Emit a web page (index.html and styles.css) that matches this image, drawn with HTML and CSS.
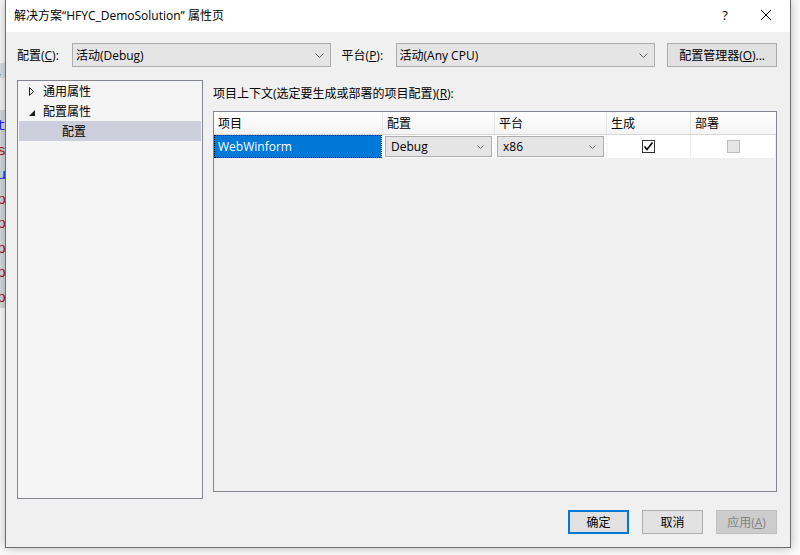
FILE: index.html
```html
<!DOCTYPE html>
<html lang="zh-CN">
<head>
<meta charset="utf-8">
<title>属性页</title>
<link rel="stylesheet" href="styles.css">
</head>
<body>
<div class="desktop">
  <div class="editor-strip">
    <div class="es-top"></div>
    <div class="es-tab">讠</div>
    <div class="es-gap"></div>
    <div class="es-code">
      <div class="cl blue">t</div>
      <div class="cl red">s</div>
      <div class="cl blue">u</div>
      <div class="cl red">p</div>
      <div class="cl red">p</div>
      <div class="cl red">p</div>
      <div class="cl red">p</div>
      <div class="cl red">p</div>
    </div>
  </div>

  <div class="window">
    <div class="titlebar">
      <span class="title">解决方案“HFYC_DemoSolution” 属性页</span>
      <span class="tb-help">?</span>
      <span class="tb-close"><svg width="12" height="12" viewBox="0 0 12 12"><path d="M1 1L11 11M11 1L1 11" stroke="#000" stroke-width="1" fill="none"/></svg></span>
    </div>

    <div class="content">
      <div class="toprow">
        <span class="lbl lbl-cfg">配置(<u>C</u>):</span>
        <div class="combo combo-cfg"><span>活动(Debug)</span><svg class="chev" width="9" height="5" viewBox="0 0 9 5"><path d="M0.5 0.5L4.5 4.5L8.5 0.5" stroke="#606060" fill="none"/></svg></div>
        <span class="lbl lbl-plat">平台(<u>P</u>):</span>
        <div class="combo combo-plat"><span>活动(Any CPU)</span><svg class="chev" width="9" height="5" viewBox="0 0 9 5"><path d="M0.5 0.5L4.5 4.5L8.5 0.5" stroke="#606060" fill="none"/></svg></div>
        <div class="btn btn-mgr">配置管理器(<u>O</u>)...</div>
      </div>

      <div class="main">
        <div class="tree">
          <div class="node">
            <svg class="tri" width="6" height="9" viewBox="0 0 6 9"><path d="M0.5 0.5L4.5 4.5L0.5 8.5Z" stroke="#1e1e1e" fill="none"/></svg>
            <span>通用属性</span>
          </div>
          <div class="node">
            <svg class="tri" width="6" height="9" viewBox="0 0 6 9"><path d="M6 3L6 9L0 9Z" fill="#1e1e1e"/></svg>
            <span>配置属性</span>
          </div>
          <div class="node child selected"><span>配置</span></div>
        </div>

        <div class="right">
          <div class="ctx-label">项目上下文(选定要生成或部署的项目配置)(<u>R</u>):</div>
          <div class="grid">
            <div class="grid-table">
              <div class="hcell">项目</div>
              <div class="hcell">配置</div>
              <div class="hcell">平台</div>
              <div class="hcell">生成</div>
              <div class="hcell">部署</div>

              <div class="dcell dsel"><span>WebWinform</span></div>
              <div class="dcell dcombo"><div class="cellcombo"><span>Debug</span><svg class="chev small" width="7" height="4" viewBox="0 0 7 4"><path d="M0.5 0.5L3.5 3.5L6.5 0.5" stroke="#707070" fill="none"/></svg></div></div>
              <div class="dcell dcombo"><div class="cellcombo"><span>x86</span><svg class="chev small" width="7" height="4" viewBox="0 0 7 4"><path d="M0.5 0.5L3.5 3.5L6.5 0.5" stroke="#707070" fill="none"/></svg></div></div>
              <div class="dcell dcheck"><span class="chk on"><svg width="11" height="11" viewBox="0 0 11 11"><path d="M1.5 5.5L4 8.5L9.5 1.5" stroke="#000" stroke-width="1.6" fill="none"/></svg></span></div>
              <div class="dcell dcheck"><span class="chk off"></span></div>
            </div>
          </div>
        </div>
      </div>

      <div class="buttons">
        <div class="btn btn-ok">确定</div>
        <div class="btn">取消</div>
        <div class="btn btn-disabled">应用(<u>A</u>)</div>
      </div>
    </div>
  </div>
</div>
</body>
</html>
```

FILE: styles.css
```css
* { box-sizing: border-box; }
html, body { margin: 0; padding: 0; }
body {
  width: 800px;
  height: 555px;
  overflow: hidden;
  background: #f7f7f7;
  font-family: "Segoe UI", "Open Sans", "Noto Sans CJK SC", sans-serif;
  font-size: 12px;
  color: #000;
}
.desktop {
  position: relative;
  width: 800px;
  height: 555px;
  background: #fbfbfb;
}

/* editor behind the dialog */
.editor-strip {
  position: absolute;
  left: 0;
  top: 0;
  width: 6px;
  height: 555px;
  overflow: hidden;
  display: flex;
  flex-direction: column;
}
.es-top { height: 63px; background: #fafafa; }
.es-tab {
  height: 15px;
  background: #dcdfe3;
  font-family: "Noto Sans CJK SC", sans-serif;
  font-size: 13px;
  line-height: 15px;
  color: #333;
  text-indent: -6px;
}
.es-gap { height: 32px; background: #f5f5f5; }
.es-code {
  height: 198px;
  background: #d7dadd;
  padding-top: 5px;
  font-family: "Liberation Mono", monospace;
  font-size: 15px;
}
.cl { height: 24.5px; line-height: 24px; text-indent: -3px; }
.cl.blue { color: #1a1aff; }
.cl.red { color: #a31515; }

/* the dialog window */
.window {
  position: absolute;
  left: 5px;
  top: -1px;
  width: 786px;
  height: 549px;
  border: 1px solid #6d6d6d;
  background: #f0f0f0;
  box-shadow: 0 0 10px rgba(0,0,0,0.28);
  display: flex;
  flex-direction: column;
}
.titlebar {
  height: 32px;
  background: #fff;
  display: flex;
  align-items: center;
  padding-left: 8px;
  padding-bottom: 2px;
}
.title { flex: 1; }
.tb-help {
  width: 20px;
  text-align: center;
  font-size: 13px;
  margin-right: 25px;
}
.tb-close {
  width: 12px;
  height: 12px;
  display: flex;
  margin-right: 18px;
}

.content {
  flex: 1;
  display: flex;
  flex-direction: column;
  padding: 11px 13px 0 11px;
}
.toprow {
  display: flex;
  align-items: center;
  height: 24px;
}
.lbl { white-space: nowrap; }
.lbl-cfg { width: 55px; }
.lbl-plat { width: 54px; margin-left: 11px; }
.combo {
  height: 24px;
  background: #e5e5e5;
  border: 1px solid #acacac;
  display: flex;
  align-items: center;
  justify-content: space-between;
  padding: 0 6px 0 3px;
}
.combo-cfg { width: 259px; }
.combo-plat { width: 260px; }
.chev { flex: none; }

.btn {
  height: 24px;
  width: 61px;
  background: #e1e1e1;
  border: 1px solid #adadad;
  display: flex;
  align-items: center;
  justify-content: center;
  white-space: nowrap;
}
.btn-mgr { width: 110px; margin-left: 12px; }
.btn-ok { border: 2px solid #0078d7; }
.btn-disabled { background: #cccccc; border-color: #bfbfbf; color: #838383; }

.main {
  display: flex;
  margin-top: 13px;
  height: 419px;
}
.tree {
  width: 186px;
  height: 419px;
  background: #f5f5f5;
  border: 1px solid #828790;
  padding: 0 1px;
}
.node {
  height: 20px;
  display: flex;
  align-items: center;
  padding-left: 10px;
}
.node .tri { width: 6px; margin-right: 8px; flex: none; }
.node.child { padding-left: 43px; }
.node.selected { background: #cccedb; }

.right {
  margin-left: 10px;
  width: 564px;
  display: flex;
  flex-direction: column;
}
.ctx-label {
  height: 31px;
  padding-top: 4px;
}
.grid {
  height: 381px;
  border: 1px solid #828790;
  background: #f0f0f0;
}
.grid-table {
  display: grid;
  grid-template-columns: 169px 112px 112px 84px 85px;
  grid-template-rows: 23px 23px;
}
.hcell {
  background: linear-gradient(#ffffff, #f4f4f4);
  border-right: 1px solid #e3e3e3;
  border-bottom: 1px solid #d5d5d5;
  padding-left: 4px;
  padding-bottom: 1px;
  display: flex;
  align-items: center;
}
.hcell:nth-child(5) { border-right: none; }
.dcell {
  background: #fff;
  border-right: 1px solid #f0f0f0;
  display: flex;
  align-items: center;
}
.dsel {
  background: #0078d7;
  color: #fff;
  outline: 1px dotted #000;
  outline-offset: -1px;
  padding-left: 4px;
  margin-right: 1px;
}
.dcombo { padding: 1px 2px 1px 2px; }
.cellcombo {
  width: 100%;
  height: 21px;
  background: #e5e5e5;
  border: 1px solid #acacac;
  display: flex;
  align-items: center;
  justify-content: space-between;
  padding: 0 7px 0 5px;
}
.dcheck { justify-content: center; }
.chk {
  width: 13px;
  height: 13px;
  display: flex;
  align-items: center;
  justify-content: center;
}
.chk.on { border: 1px solid #333; background: #fff; }
.chk.off { border: 1px solid #bcbcbc; background: #e6e6e6; }

.buttons {
  display: flex;
  justify-content: flex-end;
  gap: 13px;
  margin-top: 11px;
}
```
